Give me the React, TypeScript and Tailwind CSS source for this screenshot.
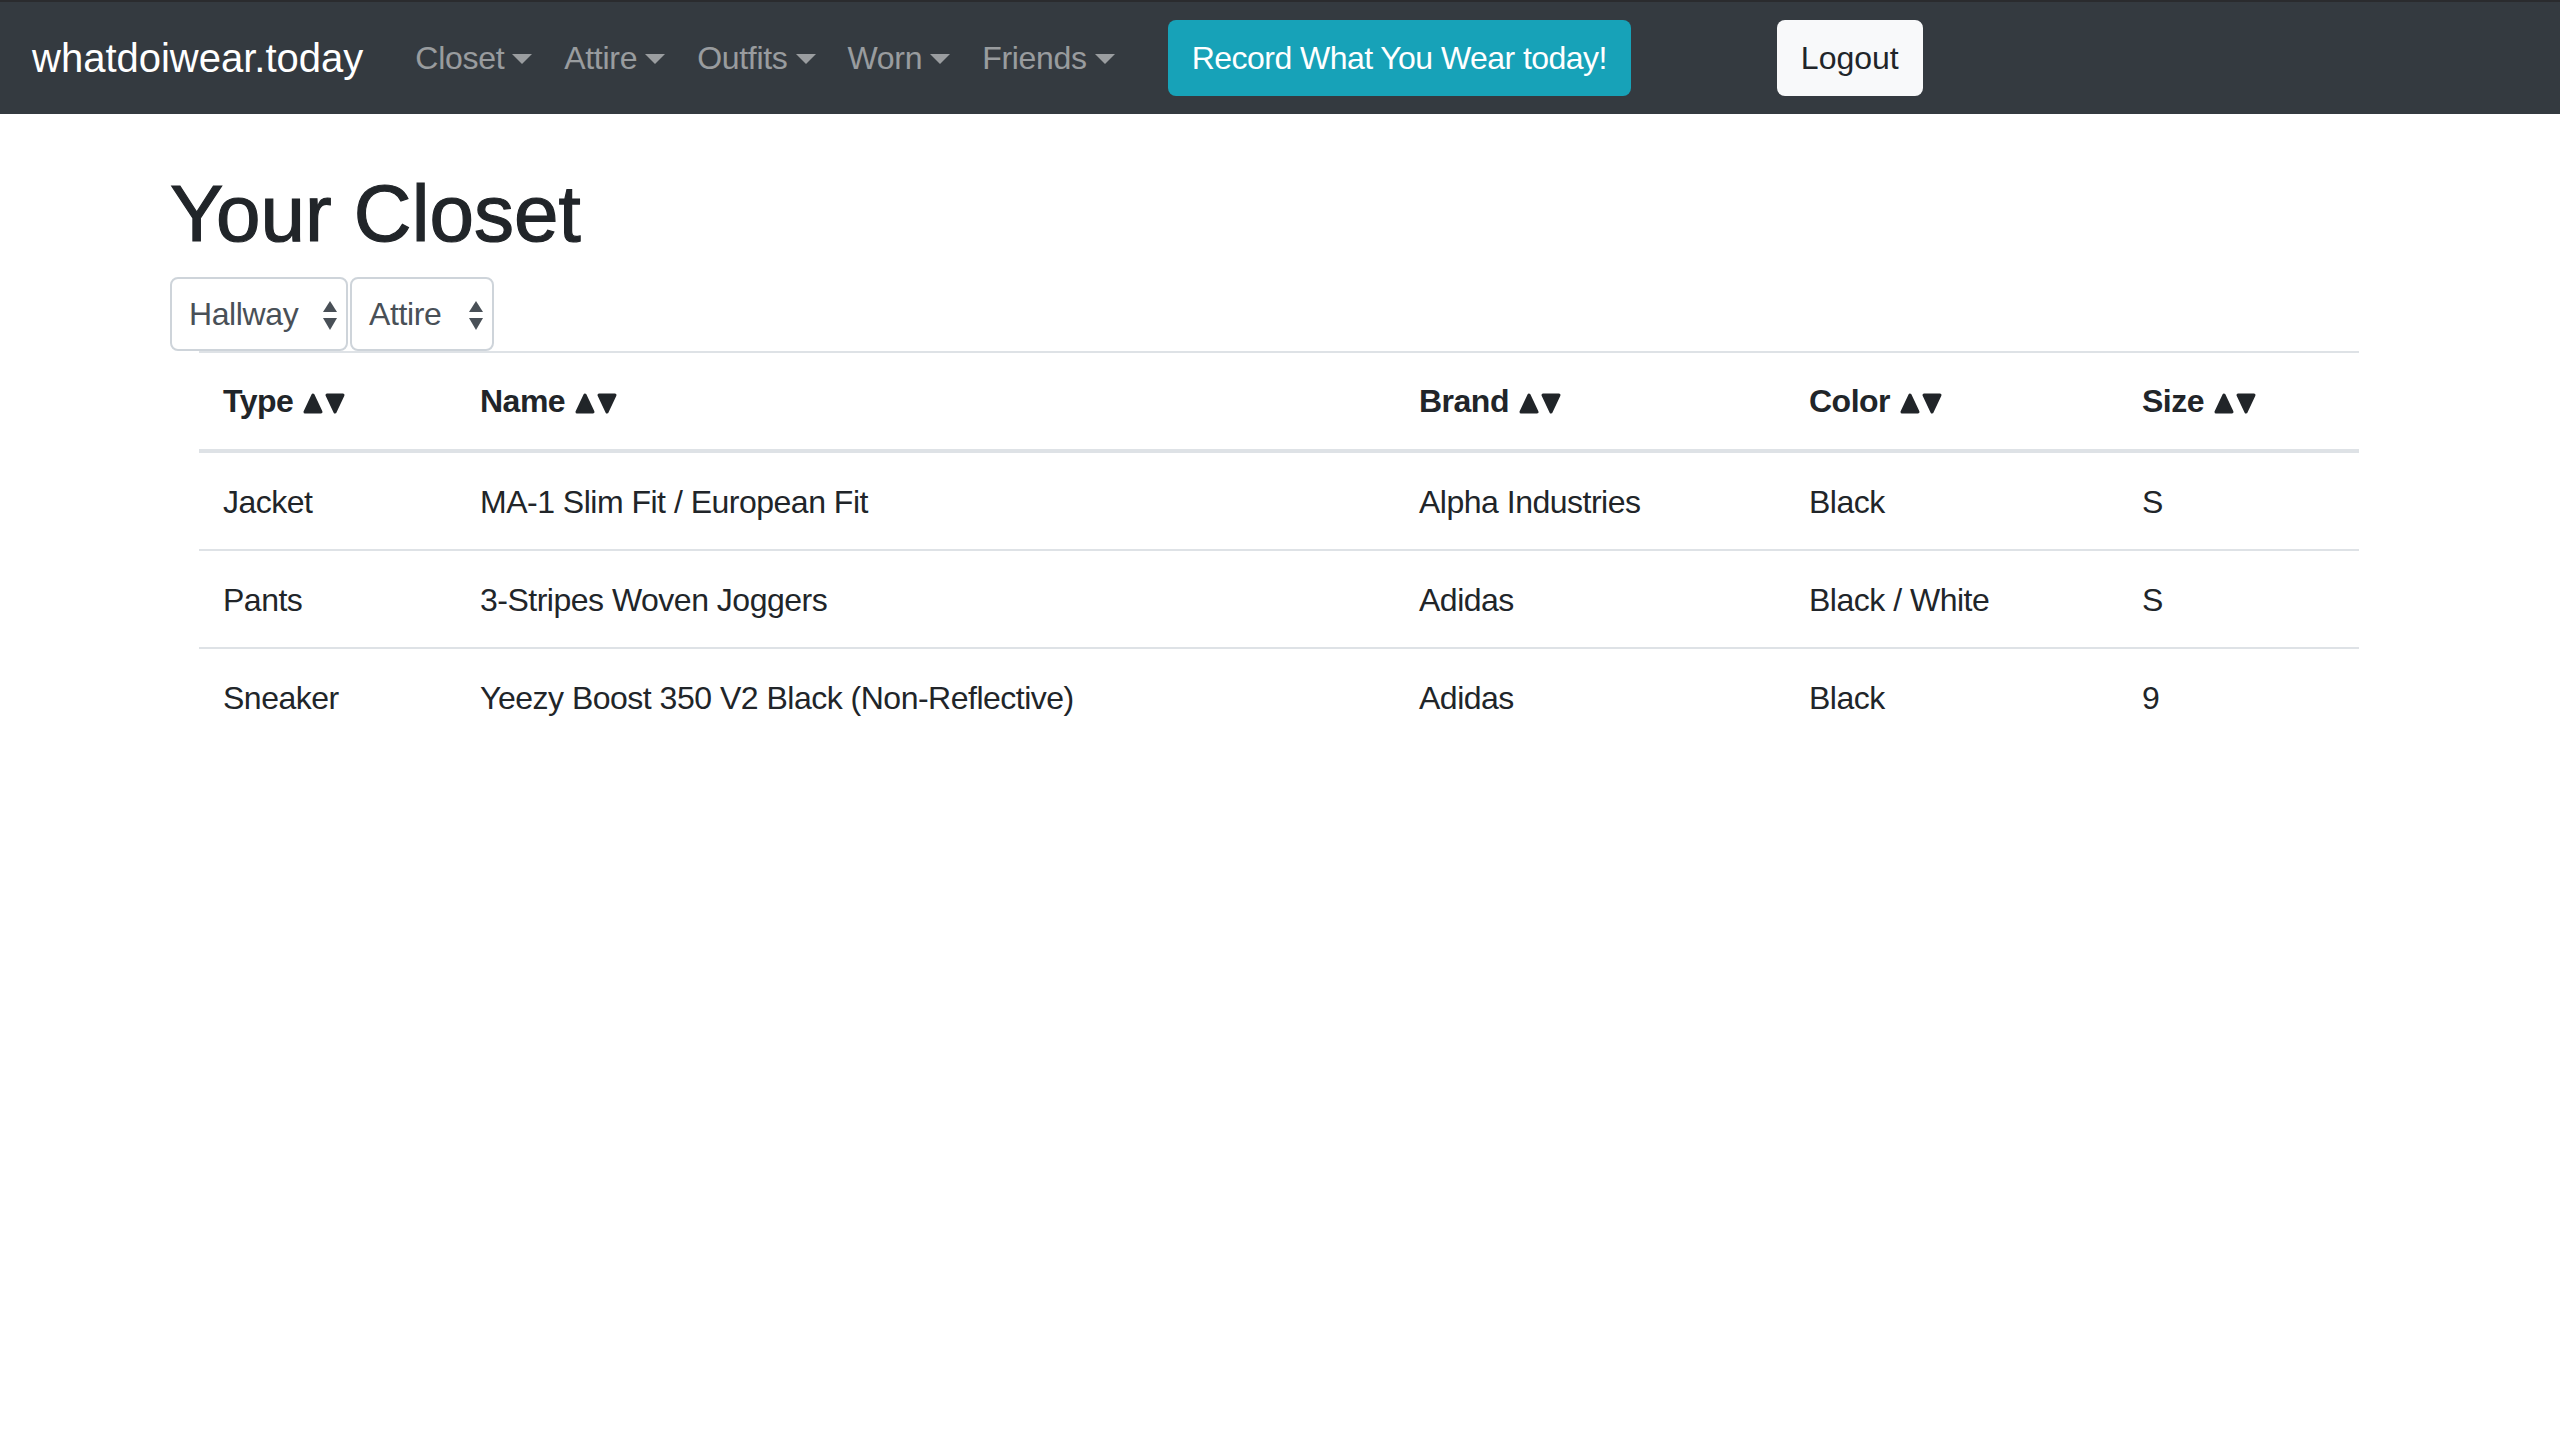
import React from 'react';

type Item = {
  type: string;
  name: string;
  brand: string;
  color: string;
  size: string;
};

const items: Item[] = [
  { type: 'Jacket', name: 'MA-1 Slim Fit / European Fit', brand: 'Alpha Industries', color: 'Black', size: 'S' },
  { type: 'Pants', name: '3-Stripes Woven Joggers', brand: 'Adidas', color: 'Black / White', size: 'S' },
  { type: 'Sneaker', name: 'Yeezy Boost 350 V2 Black (Non-Reflective)', brand: 'Adidas', color: 'Black', size: '9' },
];

const navItems = ['Closet', 'Attire', 'Outfits', 'Worn', 'Friends'];

const SelectArrow: React.FC = () => (
  <svg width="14" height="29" viewBox="0 0 14 29" className="absolute right-[9px] top-[22px]">
    <path d="M7 0L14 11H0z" fill="#495057" />
    <path d="M7 29L14 17H0z" fill="#495057" />
  </svg>
);

const SortIcon: React.FC = () => (
  <svg width="42" height="21" viewBox="0 0 42 21" className="inline-block ml-[10px] align-[-2px]">
    <path d="M10 2L18 19H2z" fill="#212529" stroke="#212529" strokeWidth="3" strokeLinejoin="round" />
    <path d="M32 19L40 2H24z" fill="#212529" stroke="#212529" strokeWidth="3" strokeLinejoin="round" />
  </svg>
);

const FakeSelect: React.FC<{ label: string; width: string }> = ({ label, width }) => (
  <div
    className={`relative h-[74px] ${width} rounded-[8px] border-2 border-[#ced4da] bg-white pl-[17px] flex items-center text-[32px] leading-[48px] tracking-[-0.4px] text-[#495057]`}
  >
    {label}
    <SelectArrow />
  </div>
);

const SortHeader: React.FC<{ label: string; width: string }> = ({ label, width }) => (
  <th className={`${width} px-6 py-6 text-left align-top font-bold text-[32px] leading-[48px] tracking-[-0.5px] border-t-2 border-b-4 border-[#dee2e6]`}>
    {label}
    <SortIcon />
  </th>
);

const App: React.FC = () => {
  return (
    <div className="min-h-screen bg-white text-[#212529] font-['Liberation_Sans',Arial,sans-serif]">
      <nav className="h-[114px] bg-[#343a40] border-t-2 border-[#2a2b2e] flex items-center px-8">
        <a className="text-[40px] leading-[60px] text-white mr-[36px]">whatdoiwear.today</a>
        <ul className="flex items-center">
          {navItems.map((n) => (
            <li key={n}>
              <a className="flex items-center px-4 text-[32px] leading-[48px] tracking-[-0.3px] text-white/50">
                {n}
                <span className="ml-2 mt-[2px] w-0 h-0 border-t-[10px] border-x-[10px] border-x-transparent border-t-[#9a9da0]" />
              </a>
            </li>
          ))}
        </ul>
        <button className="ml-[37px] h-[76px] px-6 rounded-[8px] bg-[#17a2b8] text-white text-[32px] leading-[48px] tracking-[-0.55px]">
          Record What You Wear today!
        </button>
        <button className="ml-[146px] h-[76px] px-6 rounded-[8px] bg-[#f8f9fa] text-[#212529] text-[32px] leading-[48px]">
          Logout
        </button>
      </nav>

      <main className="w-[2280px] mx-auto px-[30px]">
        <h1 className="mt-[52px] mb-[15px] text-[80px] leading-[96px] font-medium [-webkit-text-stroke:1.2px_#212529]">
          Your Closet
        </h1>
        <div className="flex gap-[2px]">
          <FakeSelect label="Hallway" width="w-[178px]" />
          <FakeSelect label="Attire" width="w-[144px]" />
        </div>
        <div className="mx-[29px]">
          <table className="w-[2160px] table-fixed">
            <thead>
              <tr>
                <SortHeader label="Type" width="w-[257px]" />
                <SortHeader label="Name" width="w-[939px]" />
                <SortHeader label="Brand" width="w-[390px]" />
                <SortHeader label="Color" width="w-[333px]" />
                <SortHeader label="Size" width="w-[241px]" />
              </tr>
            </thead>
            <tbody>
              {items.map((it) => (
                <tr key={it.name}>
                  {[it.type, it.name, it.brand, it.color, it.size].map((v, i) => (
                    <td key={i} className="px-6 pt-[25px] pb-[23px] text-[32px] leading-[48px] tracking-[-0.5px] border-t-2 border-[#dee2e6]">
                      {v}
                    </td>
                  ))}
                </tr>
              ))}
            </tbody>
          </table>
        </div>
      </main>
    </div>
  );
};

export default App;
